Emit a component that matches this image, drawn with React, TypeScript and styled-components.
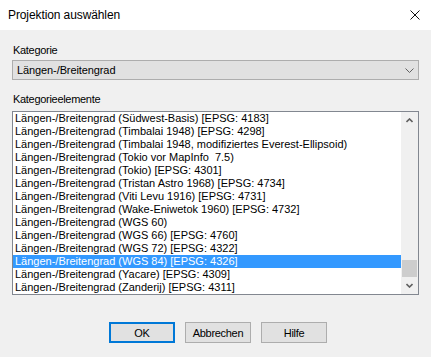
import styled, { createGlobalStyle } from "styled-components"

const GlobalStyle = createGlobalStyle`
  html, body {
    margin: 0;
    padding: 0;
    background: #f0f0f0;
  }
`

const Window = styled.div`
  width: 431px;
  height: 357px;
  display: flex;
  flex-direction: column;
  background: #f0f0f0;
  font-family: "Liberation Sans", Arial, sans-serif;
  color: #000;
  overflow: hidden;
`

const TitleBar = styled.div`
  height: 30px;
  flex: none;
  background: #fff;
  display: flex;
  align-items: center;
  justify-content: space-between;
  padding: 0 11px 0 8px;
`

const Title = styled.span`
  font-size: 12px;
  letter-spacing: -0.1px;
`

const CloseIcon = styled.svg`
  width: 10px;
  height: 10px;
  margin-top: -1px;
`

const Body = styled.div`
  flex: 1;
  display: flex;
  flex-direction: column;
  padding: 0 12px;
  font-size: 11px;
  letter-spacing: -0.3px;
`

const FieldLabel = styled.div<{ $top: number }>`
  height: 13px;
  line-height: 13px;
  padding-left: 1px;
  margin-top: ${({ $top }) => $top}px;
`

const Combo = styled.div`
  margin-top: 3px;
  height: 20px;
  box-sizing: border-box;
  border: 1px solid #adadad;
  background: #e1e1e1;
  display: flex;
  align-items: center;
  justify-content: space-between;
  padding: 0 4px 0 4px;
  line-height: 13px;
  letter-spacing: -0.1px;
`

const Chevron = styled.svg`
  width: 9px;
  height: 5px;
`

const ListBox = styled.div`
  margin-top: 5px;
  height: 184px;
  box-sizing: border-box;
  border: 1px solid #828790;
  background: #fff;
  display: flex;
`

const Rows = styled.div`
  flex: 1;
  display: flex;
  flex-direction: column;
  overflow: hidden;
`

const Row = styled.div<{ $selected?: boolean }>`
  height: 13px;
  line-height: 13px;
  padding-left: 2px;
  white-space: pre;
  letter-spacing: 0;
  background: ${({ $selected }) => ($selected ? "#3399ff" : "transparent")};
  color: ${({ $selected }) => ($selected ? "#fff" : "#000")};
`

const ScrollBar = styled.div`
  width: 17px;
  flex: none;
  background: #f0f0f0;
  display: flex;
  flex-direction: column;
`

const ScrollArrow = styled.div`
  height: 17px;
  flex: none;
  display: flex;
  align-items: center;
  justify-content: center;
`

const ScrollTrack = styled.div`
  flex: 1;
  display: flex;
  flex-direction: column;
  justify-content: flex-end;
  align-items: center;
`

const ScrollThumb = styled.div`
  width: 15px;
  height: 17px;
  background: #cdcdcd;
`

const ArrowGlyph = styled.svg`
  width: 7px;
  height: 5px;
`

const ButtonRow = styled.div`
  margin-top: 27px;
  display: flex;
  justify-content: center;
  gap: 10px;
  padding-left: 5px;
`

const DialogButton = styled.button<{ $default?: boolean }>`
  width: 66px;
  height: 21px;
  box-sizing: border-box;
  padding: 0;
  border: ${({ $default }) =>
    $default ? "2px solid #0078d7" : "1px solid #adadad"};
  background: #e1e1e1;
  font-family: "Liberation Sans", Arial, sans-serif;
  font-size: 11px;
  letter-spacing: -0.3px;
  color: #000;
`

const items = [
  "Längen-/Breitengrad (Südwest-Basis) [EPSG: 4183]",
  "Längen-/Breitengrad (Timbalai 1948) [EPSG: 4298]",
  "Längen-/Breitengrad (Timbalai 1948, modifiziertes Everest-Ellipsoid)",
  "Längen-/Breitengrad (Tokio vor MapInfo  7.5)",
  "Längen-/Breitengrad (Tokio) [EPSG: 4301]",
  "Längen-/Breitengrad (Tristan Astro 1968) [EPSG: 4734]",
  "Längen-/Breitengrad (Viti Levu 1916) [EPSG: 4731]",
  "Längen-/Breitengrad (Wake-Eniwetok 1960) [EPSG: 4732]",
  "Längen-/Breitengrad (WGS 60)",
  "Längen-/Breitengrad (WGS 66) [EPSG: 4760]",
  "Längen-/Breitengrad (WGS 72) [EPSG: 4322]",
  "Längen-/Breitengrad (WGS 84) [EPSG: 4326]",
  "Längen-/Breitengrad (Yacare) [EPSG: 4309]",
  "Längen-/Breitengrad (Zanderij) [EPSG: 4311]",
]

const selectedIndex = 11

export default function App() {
  return (
    <>
      <GlobalStyle />
      <Window>
        <TitleBar>
          <Title>Projektion auswählen</Title>
          <CloseIcon viewBox="0 0 10 10">
            <path d="M0.5 0.5 L9.5 9.5 M9.5 0.5 L0.5 9.5" stroke="#111" strokeWidth="1" />
          </CloseIcon>
        </TitleBar>
        <Body>
          <FieldLabel $top={14}>Kategorie</FieldLabel>
          <Combo>
            <span>Längen-/Breitengrad</span>
            <Chevron viewBox="0 0 9 5">
              <path d="M0.5 0.5 L4.5 4.5 L8.5 0.5" stroke="#606060" fill="none" strokeWidth="1" />
            </Chevron>
          </Combo>
          <FieldLabel $top={13}>Kategorieelemente</FieldLabel>
          <ListBox>
            <Rows>
              {items.map((text, i) => (
                <Row key={text} $selected={i === selectedIndex}>
                  {text}
                </Row>
              ))}
            </Rows>
            <ScrollBar>
              <ScrollArrow>
                <ArrowGlyph viewBox="0 0 7 5">
                  <path d="M0.5 4 L3.5 1 L6.5 4" stroke="#606060" fill="none" strokeWidth="1.6" />
                </ArrowGlyph>
              </ScrollArrow>
              <ScrollTrack>
                <ScrollThumb />
              </ScrollTrack>
              <ScrollArrow>
                <ArrowGlyph viewBox="0 0 7 5">
                  <path d="M0.5 1 L3.5 4 L6.5 1" stroke="#606060" fill="none" strokeWidth="1.6" />
                </ArrowGlyph>
              </ScrollArrow>
            </ScrollBar>
          </ListBox>
          <ButtonRow>
            <DialogButton $default>OK</DialogButton>
            <DialogButton>Abbrechen</DialogButton>
            <DialogButton>Hilfe</DialogButton>
          </ButtonRow>
        </Body>
      </Window>
    </>
  )
}
